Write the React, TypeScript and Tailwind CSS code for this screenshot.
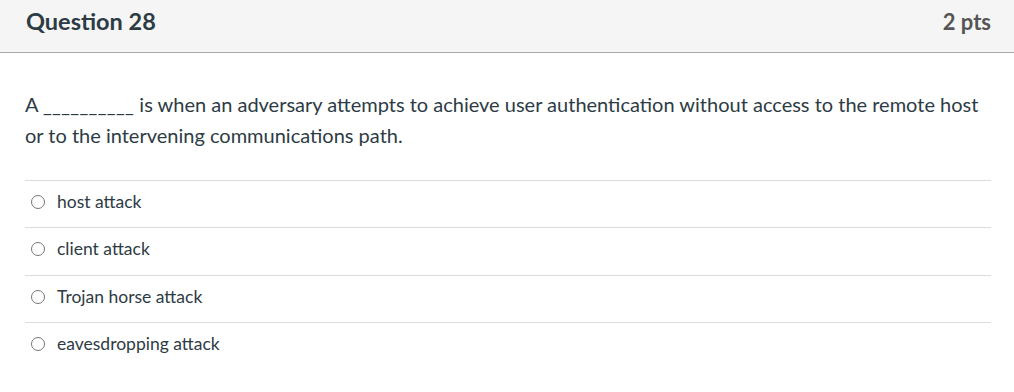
const answers = ['host attack', 'client attack', 'Trojan horse attack', 'eavesdropping attack'];

export default function App() {
  return (
    <div className="w-[1014px] h-[392px] bg-white text-[#2d3b45]" style={{ fontFamily: 'Lato, "Open Sans", sans-serif' }}>
      {/* Header */}
      <div className="h-[53px] flex items-center justify-between pl-[26px] pr-[23px] pb-[8px] bg-[#f5f5f5] border-b border-[#a8a8a8]">
        <h2 className="text-[23.5px] font-bold leading-none">Question 28</h2>
        <div className="text-[22px] font-bold leading-none text-[#555]">2 pts</div>
      </div>

      {/* Body */}
      <div className="pl-[25px] pr-[23px]">
        <div className="pt-[36px] pb-[30px] text-[20px] leading-[30px]">
          A <span className="text-[19px] tracking-[0.4px]">__________</span> is when an adversary attempts to achieve user authentication without access to the remote host or to the intervening communications path.
        </div>

        <div>
          {answers.map((a) => (
            <label key={a} className="h-[47.3px] flex items-center gap-[12px] pl-[6px] pb-[4px] border-t border-[#dcdcdc] text-[17.5px]">
              <span className="w-[14px] h-[14px] rounded-full border border-[#767676] bg-white shrink-0" />
              <span>{a}</span>
            </label>
          ))}
        </div>
      </div>
    </div>
  );
}
